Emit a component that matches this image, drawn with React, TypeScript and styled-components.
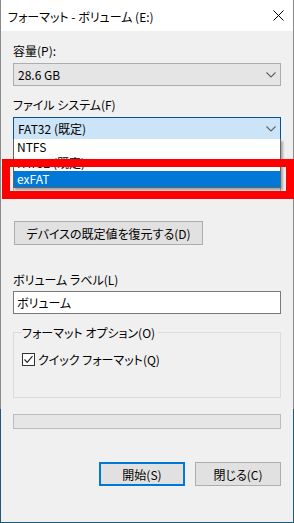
import React from "react";
import styled, { createGlobalStyle } from "styled-components";

const Global = createGlobalStyle`
  html, body { margin: 0; padding: 0; background: #1d5a76; }
  body { font-family: "Noto Sans CJK JP", "Noto Sans", sans-serif; font-size: 12px; color: #000; }
  * { box-sizing: border-box; }
`;

const Frame = styled.div`
  position: relative;
  width: 294px;
  height: 523px;
  padding: 0 1px 1px 1px;
  background: linear-gradient(to bottom, #8a8a8a 0, #8a8a8a 409px, #1d5a76 409px);
`;

const Window = styled.div`
  display: flex;
  flex-direction: column;
  height: 100%;
  background: #f0f0f0;
  font-feature-settings: "palt";
`;

const TitleBar = styled.div`
  display: flex;
  align-items: center;
  justify-content: space-between;
  height: 31px;
  flex: none;
  background: #fff;
  padding: 0 9px 0 7px;
`;

const TitleText = styled.span`
  font-size: 12px;
  line-height: 15px;
  margin-top: 1px;
`;

const Body = styled.div`
  display: flex;
  flex-direction: column;
  padding: 12px 12px 0 12px;
`;

const Field = styled.div<{ $after: number; $gap?: number }>`
  display: flex;
  flex-direction: column;
  gap: ${(p) => p.$gap ?? 5}px;
  margin-bottom: ${(p) => p.$after}px;
`;

const Label = styled.div`
  height: 15px;
  line-height: 15px;
  white-space: nowrap;
`;

const ComboWrap = styled.div`
  position: relative;
`;

const Combo = styled.div<{ $focused?: boolean }>`
  display: flex;
  align-items: center;
  justify-content: space-between;
  height: 23px;
  padding: 0 4px 0 4px;
  border: 1px solid ${(p) => (p.$focused ? "#005499" : "#adadad")};
  background: ${(p) => (p.$focused ? "#cce4f7" : "#e5e5e5")};
  line-height: 15px;
`;

const DropList = styled.div`
  position: absolute;
  left: 0;
  right: 0;
  top: calc(100% - 1px);
  z-index: 2;
  background: #fff;
  border: 1px solid #646464;
  border-top: none;
  box-shadow: 2px 2px 2px rgba(0, 0, 0, 0.3);
`;

const DropItem = styled.div<{ $selected?: boolean }>`
  height: 16px;
  line-height: 16px;
  padding-left: 3px;
  background: ${(p) => (p.$selected ? "#0078d7" : "#fff")};
  color: ${(p) => (p.$selected ? "#fff" : "#000")};
`;

const Button = styled.div<{ $default?: boolean; $width: number }>`
  display: flex;
  align-items: center;
  justify-content: center;
  width: ${(p) => p.$width}px;
  height: ${(p) => (p.$default ? 24 : 24)}px;
  background: #e1e1e1;
  border: ${(p) => (p.$default ? "2px solid #0078d7" : "1px solid #adadad")};
  line-height: 15px;
  white-space: nowrap;
`;

const RestoreRow = styled.div`
  display: flex;
  padding-left: 1px;
  margin-bottom: 27px;
`;

const TextBox = styled.div`
  height: 23px;
  border: 1px solid #7a7a7a;
  background: #fff;
  padding: 0 3px;
  line-height: 21px;
`;

const Group = styled.div`
  display: flex;
  flex-direction: column;
  margin-top: 18px;
  border: 1px solid #dcdcdc;
  padding: 0 0 31px 8px;
`;

const GroupTitle = styled.div`
  align-self: flex-start;
  height: 15px;
  line-height: 15px;
  margin-top: -8px;
  padding: 0 3px 0 0;
  background: #f0f0f0;
`;

const CheckRow = styled.div`
  display: flex;
  align-items: center;
  gap: 3px;
  margin-top: 13px;
  height: 13px;
`;

const CheckBox = styled.div`
  width: 13px;
  height: 13px;
  border: 1px solid #333;
  background: #fff;
  display: flex;
  align-items: center;
  justify-content: center;
`;

const Progress = styled.div`
  height: 15px;
  margin-top: 16px;
  background: #e6e6e6;
  border: 1px solid #bcbcbc;
`;

const ButtonRow = styled.div`
  display: flex;
  justify-content: flex-end;
  gap: 10px;
  margin-top: 33px;
`;

const Highlight = styled.div`
  position: absolute;
  left: 2px;
  top: 159px;
  width: 292px;
  height: 40px;
  border: 8px solid #ff0000;
  z-index: 5;
  pointer-events: none;
`;

const Chevron = () => (
  <svg width="10" height="6" viewBox="0 0 10 6">
    <polyline points="0.5,0.5 5,5 9.5,0.5" fill="none" stroke="#606060" strokeWidth="1.1" />
  </svg>
);

const CloseIcon = () => (
  <svg width="11" height="11" viewBox="0 0 11 11">
    <path d="M0.5 0.5 L10.5 10.5 M10.5 0.5 L0.5 10.5" stroke="#000" strokeWidth="1" />
  </svg>
);

const CheckMark = () => (
  <svg width="11" height="11" viewBox="0 0 11 11">
    <polyline points="1.5,5.5 4.2,8.3 9.5,2.2" fill="none" stroke="#222" strokeWidth="1.2" />
  </svg>
);

export default function App() {
  return (
    <>
      <Global />
      <Frame>
        <Window>
          <TitleBar>
            <TitleText>フォーマット - ボリューム (E:)</TitleText>
            <CloseIcon />
          </TitleBar>
          <Body>
            <Field $after={11}>
              <Label>容量(P):</Label>
              <Combo>
                <span>28.6 GB</span>
                <Chevron />
              </Combo>
            </Field>
            <Field $after={11}>
              <Label>ファイル システム(F)</Label>
              <ComboWrap>
                <Combo $focused>
                  <span>FAT32 (既定)</span>
                  <Chevron />
                </Combo>
                <DropList>
                  <DropItem>NTFS</DropItem>
                  <DropItem>FAT32 (既定)</DropItem>
                  <DropItem $selected>exFAT</DropItem>
                </DropList>
              </ComboWrap>
            </Field>
            <Field $after={27}>
              <Label>アロケーション ユニット サイズ(A)</Label>
              <Combo>
                <span>16 キロバイト</span>
                <Chevron />
              </Combo>
            </Field>
            <RestoreRow>
              <Button $width={189}>デバイスの既定値を復元する(D)</Button>
            </RestoreRow>
            <Field $after={0} $gap={4}>
              <Label>ボリューム ラベル(L)</Label>
              <TextBox>ボリューム</TextBox>
            </Field>
            <Group>
              <GroupTitle>フォーマット オプション(O)</GroupTitle>
              <CheckRow>
                <CheckBox>
                  <CheckMark />
                </CheckBox>
                <span>クイック フォーマット(Q)</span>
              </CheckRow>
            </Group>
            <Progress />
            <ButtonRow>
              <Button $default $width={86}>開始(S)</Button>
              <Button $width={86}>閉じる(C)</Button>
            </ButtonRow>
          </Body>
        </Window>
        <Highlight />
      </Frame>
    </>
  );
}
